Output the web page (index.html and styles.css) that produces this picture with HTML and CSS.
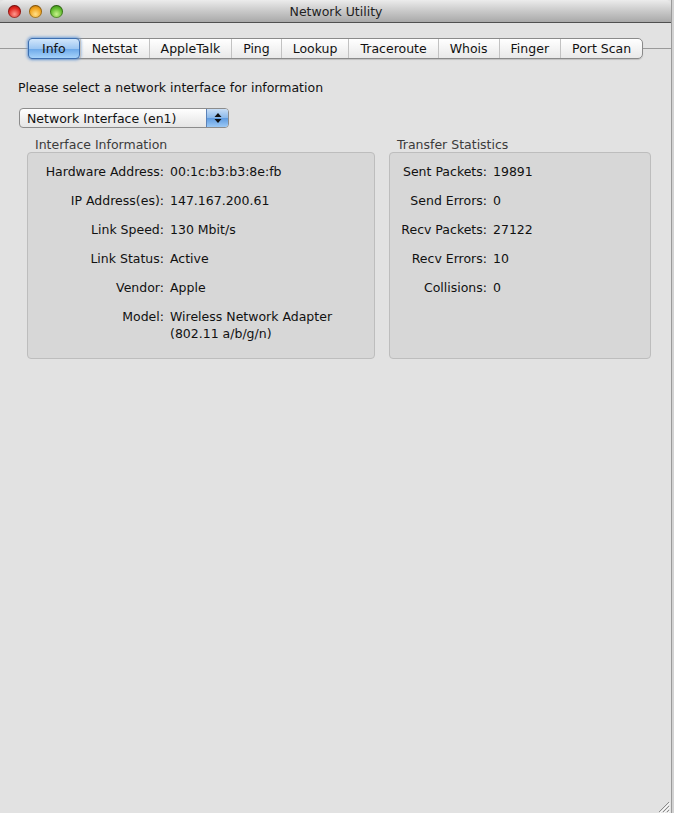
FILE: index.html
```html
<!DOCTYPE html>
<html lang="en">
<head>
    <meta charset="UTF-8">
    <title>Network Utility</title>
    <link rel="stylesheet" href="styles.css">
</head>
<body>
<div class="window">
    <div class="titlebar">
        <div class="lights">
            <span class="light red"></span>
            <span class="light yellow"></span>
            <span class="light green"></span>
        </div>
        <div class="title">Network Utility</div>
    </div>
    <div class="content">
        <!-- tab strip with the tab view line on both sides -->
        <div class="tabrow">
            <div class="rule left"></div>
            <div class="tabs">
                <span class="tab active">Info</span>
                <span class="tab">Netstat</span>
                <span class="tab">AppleTalk</span>
                <span class="tab">Ping</span>
                <span class="tab">Lookup</span>
                <span class="tab">Traceroute</span>
                <span class="tab">Whois</span>
                <span class="tab">Finger</span>
                <span class="tab">Port Scan</span>
            </div>
            <div class="rule right"></div>
        </div>
        <p class="prompt">Please select a network interface for information</p>
        <div class="popup">
            <span class="popup-text">Network Interface (en1)</span>
            <span class="popup-arrows">
                <svg width="8" height="12" viewBox="0 0 8 12"><path d="M4 1 L7.5 5 L0.5 5 Z M4 11 L7.5 7 L0.5 7 Z" fill="#111"/></svg>
            </span>
        </div>
        <div class="groups">
            <div class="group wide">
                <div class="group-title">Interface Information</div>
                <div class="group-box">
                    <div class="info">
                        <span class="k">Hardware Address:</span><span class="v">00:1c:b3:b3:8e:fb</span>
                        <span class="k">IP Address(es):</span><span class="v">147.167.200.61</span>
                        <span class="k">Link Speed:</span><span class="v">130 Mbit/s</span>
                        <span class="k">Link Status:</span><span class="v">Active</span>
                        <span class="k">Vendor:</span><span class="v">Apple</span>
                        <span class="k">Model:</span><span class="v">Wireless Network Adapter<br>(802.11 a/b/g/n)</span>
                    </div>
                </div>
            </div>
            <div class="group narrow">
                <div class="group-title">Transfer Statistics</div>
                <div class="group-box">
                    <div class="info stats">
                        <span class="k">Sent Packets:</span><span class="v">19891</span>
                        <span class="k">Send Errors:</span><span class="v">0</span>
                        <span class="k">Recv Packets:</span><span class="v">27122</span>
                        <span class="k">Recv Errors:</span><span class="v">10</span>
                        <span class="k">Collisions:</span><span class="v">0</span>
                    </div>
                </div>
            </div>
        </div>
        <div class="grip">
            <svg width="12" height="12" viewBox="0 0 12 12">
                <path d="M11 1 L1 11 M11 5 L5 11 M11 9 L9 11" stroke="#8a8a8a" stroke-width="1"/>
                <path d="M12 2 L2 12 M12 6 L6 12 M12 10 L10 12" stroke="#fafafa" stroke-width="1"/>
            </svg>
        </div>
    </div>
</div>
</body>
</html>
```
FILE: styles.css
```css
body {
    margin: 0;
    padding: 0;
    background-color: #d2d2d2;
    font-family: "DejaVu Sans", Verdana, sans-serif;
    font-size: 12.5px;
    color: #111;
}
.window {
    width: 671px;
    height: 813px;
    display: flex;
    flex-direction: column;
    background-color: #e2e2e2;
    border-right: 1px solid #9a9a9a;
}
.titlebar {
    height: 22px;
    display: flex;
    align-items: center;
    background: linear-gradient(#ececec, #c9c9c9 50%, #a9a9a9);
    border-bottom: 1px solid #505050;
    border-radius: 5px 5px 0 0;
}
.lights {
    display: flex;
    gap: 8px;
    padding-left: 8px;
}
.light {
    width: 13px;
    height: 13px;
    border-radius: 50%;
    box-shadow: inset 0 0 0 1px rgba(0, 0, 0, .35);
}
.red { background: radial-gradient(circle at 50% 70%, #ff9a8f, #e0241c 55%, #8d0b08); }
.yellow { background: radial-gradient(circle at 50% 70%, #ffe08a, #f0a11a 55%, #9a5a05); }
.green { background: radial-gradient(circle at 50% 70%, #c9f28b, #5cb82a 55%, #2c6c0d); }
.title {
    flex: 1;
    text-align: center;
    margin-right: 62px;
    font-size: 12.5px;
    color: #222;
}
.content {
    flex: 1;
    display: flex;
    flex-direction: column;
    padding-top: 15px;
}
.tabrow {
    display: flex;
    align-items: center;
}
.rule {
    height: 1px;
    background-color: #9a9a9a;
}
.rule.left { width: 28px; }
.rule.right { flex: 1; }
.tabs {
    display: flex;
    height: 19px;
    border: 1px solid #8a8a8a;
    border-radius: 5px;
    background: linear-gradient(#ffffff, #f4f4f4 50%, #e9e9e9);
    box-shadow: 0 1px 1px rgba(0, 0, 0, .15);
}
.tab {
    display: flex;
    align-items: center;
    padding: 0 11px;
    border-left: 1px solid #c2c2c2;
}
.tab:first-child { border-left: none; }
.tab.active {
    padding: 0 13px;
    margin: -1px 0 -1px -1px;
    border: 1px solid #3d6fb0;
    border-radius: 4px;
    background: linear-gradient(#d1e6fb, #9ec7f2 50%, #6aa7e8 51%, #a6d3fa);
    box-shadow: 0 0 3px 1px #6f9ed8;
}
.prompt {
    margin: 21px 0 0 18px;
    line-height: 16px;
}
.popup {
    display: flex;
    align-items: center;
    width: 208px;
    height: 18px;
    margin: 12px 0 0 19px;
    border: 1px solid #8c8c8c;
    border-radius: 4px;
    background: linear-gradient(#ffffff, #f1f1f1 50%, #e5e5e5);
    overflow: hidden;
}
.popup-text {
    flex: 1;
    padding-left: 7px;
}
.popup-arrows {
    width: 21px;
    height: 18px;
    display: flex;
    align-items: center;
    justify-content: center;
    border-left: 1px solid #5b82b8;
    background: linear-gradient(#c8def6, #8ab8ea 50%, #5f9be0 51%, #9cc9f5);
}
.groups {
    display: flex;
    gap: 14px;
    padding-left: 27px;
    margin-top: 9px;
}
.group.wide { width: 348px; }
.group.narrow { width: 262px; }
.group-title {
    padding-left: 8px;
    height: 15px;
    line-height: 15px;
    color: #3b3b3b;
}
.group-box {
    height: 205px;
    background-color: #d7d7d7;
    border: 1px solid #bdbdbd;
    border-radius: 4px;
}
.info {
    display: grid;
    grid-template-columns: 136px auto;
    column-gap: 6px;
    row-gap: 12px;
    padding-top: 10px;
    line-height: 17px;
}
.info.stats { grid-template-columns: 97px auto; }
.k { text-align: right; white-space: nowrap; }
.grip {
    margin-top: auto;
    align-self: flex-end;
    height: 12px;
    margin-right: 1px;
}
```
